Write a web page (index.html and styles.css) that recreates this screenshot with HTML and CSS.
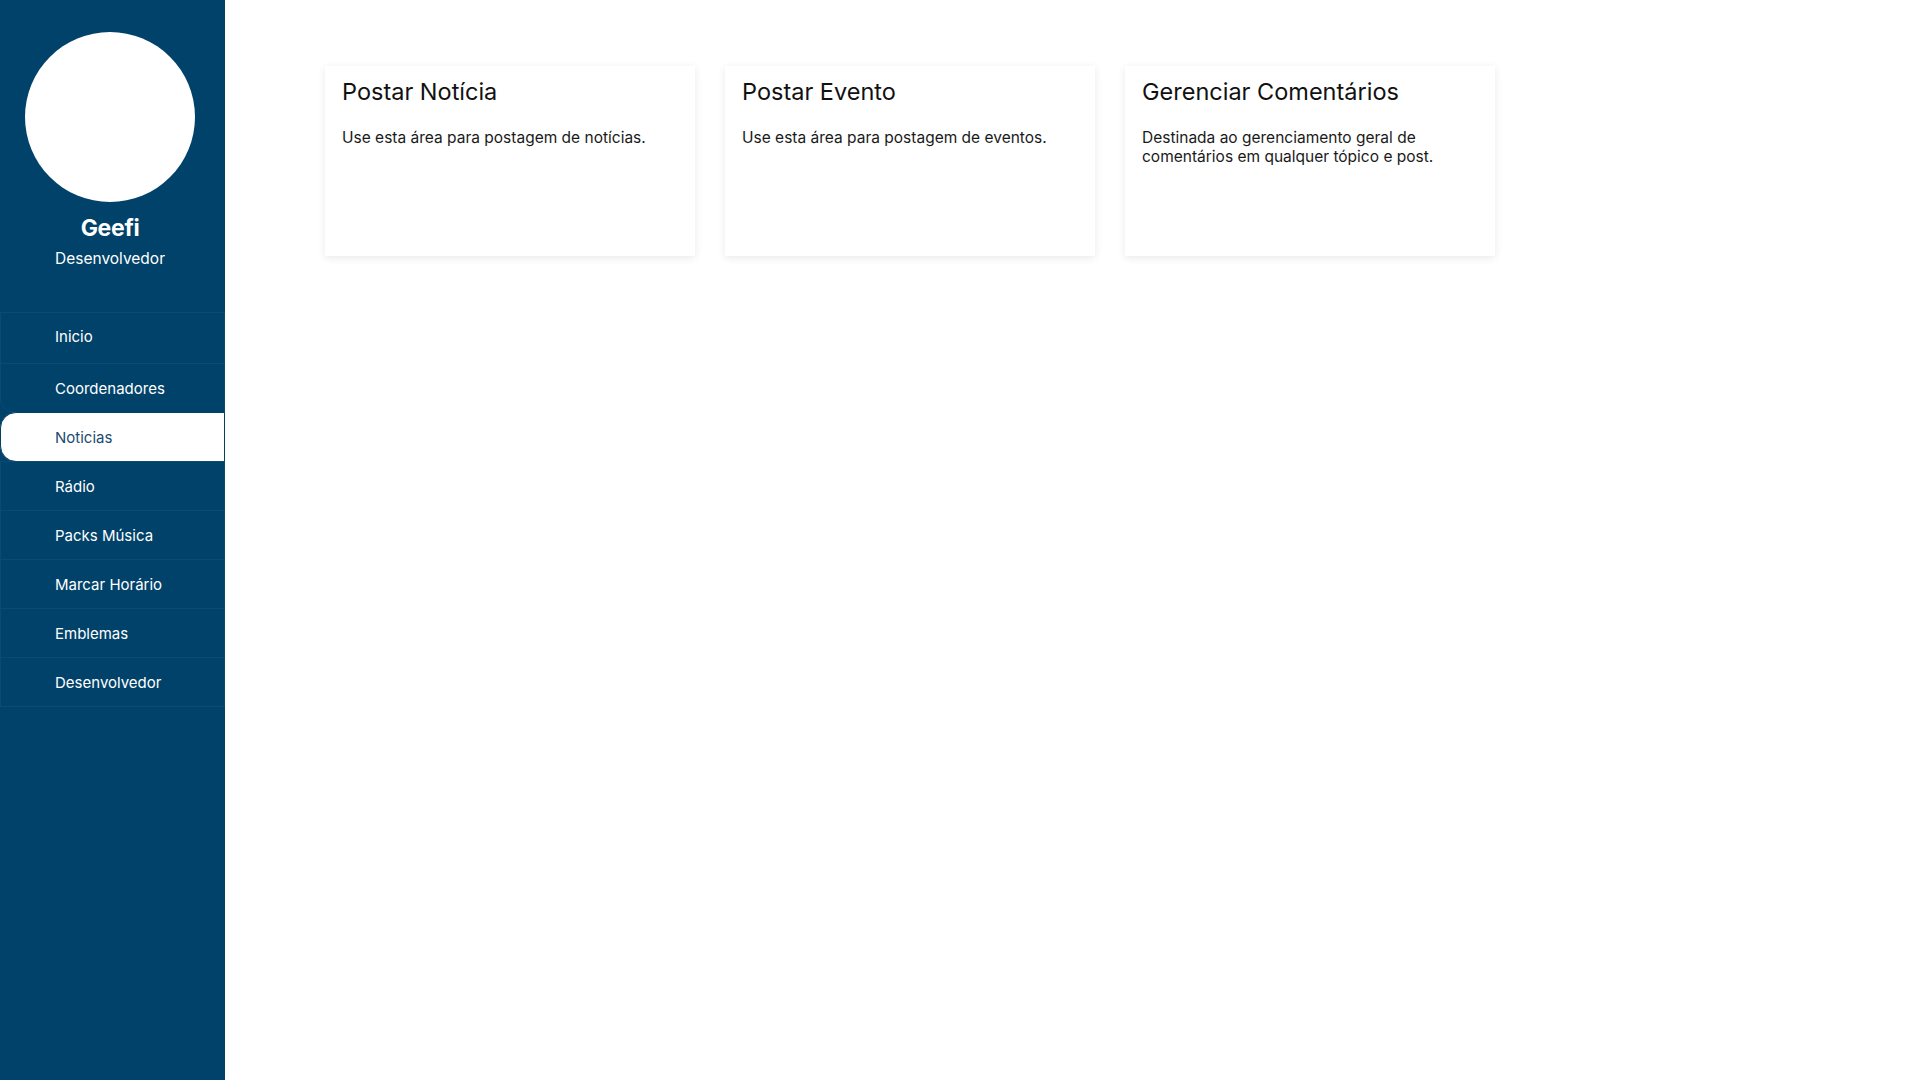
FILE: index.html
```html
<!DOCTYPE html>
<html lang="pt-BR">
<head>
<meta charset="utf-8">
<title>Painel</title>
<link rel="stylesheet" href="styles.css">
</head>
<body>
<div class="layout">
  <aside class="sidebar">
    <div class="profile">
      <div class="avatar"></div>
      <div class="name">Geefi</div>
      <div class="role">Desenvolvedor</div>
    </div>
    <nav class="nav">
      <a class="nav-item first">Inicio</a>
      <a class="nav-item before-active">Coordenadores</a>
      <a class="nav-item active">Noticias</a>
      <a class="nav-item">Rádio</a>
      <a class="nav-item">Packs Música</a>
      <a class="nav-item">Marcar Horário</a>
      <a class="nav-item">Emblemas</a>
      <a class="nav-item">Desenvolvedor</a>
    </nav>
  </aside>
  <main class="main">
    <div class="cards">
      <div class="card">
        <h2 class="card-title">Postar Notícia</h2>
        <p class="card-text">Use esta área para postagem de notícias.</p>
      </div>
      <div class="card">
        <h2 class="card-title">Postar Evento</h2>
        <p class="card-text">Use esta área para postagem de eventos.</p>
      </div>
      <div class="card">
        <h2 class="card-title">Gerenciar Comentários</h2>
        <p class="card-text">Destinada ao gerenciamento geral de comentários em qualquer tópico e post.</p>
      </div>
    </div>
  </main>
</div>
</body>
</html>
```
FILE: styles.css
```css
* { box-sizing: border-box; }
html, body { margin: 0; padding: 0; height: 100%; }
body {
  font-family: "Inter", "Noto Sans", "Liberation Sans", sans-serif;
  background: #ffffff;
  color: #111;
}
.layout {
  display: flex;
  min-height: 100vh;
}
.sidebar {
  width: 225px;
  flex: 0 0 225px;
  background: #01426a;
  color: #fff;
}
.profile {
  width: 220px;
  display: flex;
  flex-direction: column;
  align-items: center;
  padding-top: 32px;
  height: 312px;
}
.avatar {
  width: 170px;
  height: 170px;
  border-radius: 50%;
  background: #fff;
}
.name {
  margin-top: 12px;
  font-size: 23px;
  font-weight: 700;
  line-height: 28px;
  letter-spacing: -0.3px;
}
.role {
  margin-top: 7px;
  font-size: 15.5px;
  line-height: 20px;
}
.nav {
  display: flex;
  flex-direction: column;
}
.nav-item {
  display: flex;
  align-items: center;
  height: 50px;
  padding-left: 54px;
  font-size: 15px;
  color: #fff;
  border: 1px solid #0b4b73;
  margin-top: -1px;
}
.nav-item.first {
  margin-top: 0;
  height: 52px;
  padding-bottom: 4px;
}
.nav-item.before-active {
  border-bottom-left-radius: 14px;
}
.nav-item.active {
  background: #fff;
  color: #1b4b70;
  border-color: #01426a;
  border-top-left-radius: 16px;
  border-bottom-left-radius: 16px;
}
.main {
  flex: 1;
  padding: 66px 0 0 100px;
}
.cards {
  display: flex;
  gap: 30px;
}
.card {
  width: 370px;
  height: 190px;
  background: #fff;
  box-shadow: 0 2px 8px rgba(0, 0, 0, 0.09);
  padding: 11px 17px;
}
.card-title {
  margin: 0;
  font-size: 23.5px;
  font-weight: 400;
  line-height: 30px;
  color: #111;
}
.card-text {
  margin: 21px 0 0;
  font-size: 15.5px;
  line-height: 19px;
  color: #1a1a1a;
}
```
